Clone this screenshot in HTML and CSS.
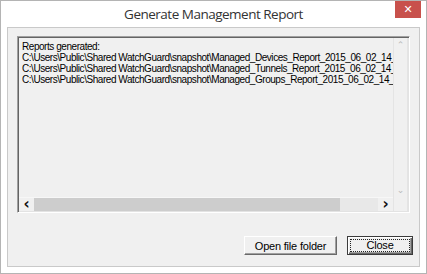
FILE: index.html
```html
<!DOCTYPE html>
<html lang="en">
<head>
  <meta charset="UTF-8">
  <title>Generate Management Report</title>
  <link rel="stylesheet" href="styles.css">
</head>
<body>
  <div class="window">
    <div class="titlebar">
      <span class="title">Generate Management Report</span>
      <button class="close-x" title="Close">&#x2715;</button>
    </div>

    <div class="client">
      <div class="report-box">
        <div class="report-view">
          <div class="report-text">Reports generated:
C:\Users\Public\Shared WatchGuard\snapshot\Managed_Devices_Report_2015_06_02_14_22_11.pdf
C:\Users\Public\Shared WatchGuard\snapshot\Managed_Tunnels_Report_2015_06_02_14_22_11.pdf
C:\Users\Public\Shared WatchGuard\snapshot\Managed_Groups_Report_2015_06_02_14_22_11.pdf</div>
        </div>
        <div class="vscroll">
          <span class="arrow">&#x2303;</span>
          <span class="arrow">&#x2304;</span>
        </div>
        <div class="hscroll">
          <span class="hbtn">&#x2039;</span>
          <div class="htrack"><div class="hthumb"></div></div>
          <span class="hbtn">&#x203A;</span>
        </div>
      </div>

      <div class="actions">
        <button class="btn btn-open">Open file folder</button>
        <button class="btn btn-default"><span class="focus">Close</span></button>
      </div>
    </div>
  </div>
</body>
</html>
```

FILE: styles.css
```css
* {
  margin: 0;
  padding: 0;
  box-sizing: border-box;
}

body {
  background: #ffffff;
  font-family: 'Liberation Sans', Arial, sans-serif;
}

.window {
  width: 427px;
  height: 274px;
  border: 1px solid #b4b4b4;
  background: #ffffff;
  padding: 0 6px 6px 6px;
  display: flex;
  flex-direction: column;
}

/* Title bar */
.titlebar {
  height: 26px;
  display: grid;
  grid-template-columns: 1fr auto 1fr;
  align-items: start;
}

.title {
  grid-column: 2;
  font-family: 'Open Sans', sans-serif;
  font-size: 13.5px;
  letter-spacing: -0.5px;
  color: #333333;
  line-height: 27px;
  white-space: nowrap;
}

.close-x {
  grid-column: 3;
  justify-self: end;
  width: 26px;
  height: 17px;
  margin-right: -1px;
  border: none;
  background: #c8514c;
  color: #ffffff;
  font-family: 'DejaVu Sans', sans-serif;
  font-size: 11px;
  font-weight: bold;
  line-height: 17px;
}

/* Client area */
.client {
  flex: 1;
  background: #f0f0f0;
  border: 1px solid #c9c9c9;
  padding: 8px 6px 0 9px;
  display: flex;
  flex-direction: column;
}

.report-box {
  width: 393px;
  height: 177px;
  border-style: solid;
  border-width: 1px;
  border-color: #a0a0a0 #ffffff #ffffff #a0a0a0;
  box-shadow: inset 1px 1px 0 #646464, inset -1px -1px 0 #e3e3e3;
  padding: 1px;
  display: grid;
  grid-template-columns: 1fr 15px;
  grid-template-rows: 1fr 14px;
  background: #f0f0f0;
}

.report-view {
  overflow: hidden;
  padding: 3px 0 0 3px;
}

.report-text {
  white-space: pre;
  font-size: 10px;
  letter-spacing: -0.45px;
  line-height: 11px;
  color: #000000;
}

/* Scroll bars */
.vscroll {
  grid-row: 1 / span 2;
  grid-column: 2;
  border-left: 1px solid #e4e4e4;
  border-right: 1px solid #e4e4e4;
  display: flex;
  flex-direction: column;
  justify-content: space-between;
  align-items: center;
  padding: 2px 0 16px 0;
  background: #f0f0f0;
}

.arrow {
  color: #b9b9b9;
  font-family: 'DejaVu Sans', sans-serif;
  font-size: 9px;
  line-height: 10px;
}

.hscroll {
  grid-row: 2;
  grid-column: 1;
  display: flex;
  align-items: stretch;
  background: #e8e8e8;
  border-top: 1px solid #f7f7f7;
}

.hbtn {
  width: 15px;
  flex-shrink: 0;
  background: #f0f0f0;
  color: #111111;
  font-family: 'DejaVu Sans', sans-serif;
  font-size: 15px;
  font-weight: bold;
  line-height: 12px;
  text-align: center;
}

.htrack {
  flex: 1;
  display: flex;
  align-items: stretch;
}

.hthumb {
  width: 306px;
  background: #cdcdcd;
}

/* Buttons */
.actions {
  margin-top: 23px;
  display: flex;
  justify-content: flex-end;
  gap: 10px;
}

.btn {
  height: 19px;
  background: #f0f0f0;
  font-family: 'Liberation Sans', Arial, sans-serif;
  font-size: 11px;
  color: #000000;
  border-style: solid;
  border-width: 1px;
  border-color: #ffffff #696969 #696969 #ffffff;
  box-shadow: inset -1px -1px 0 #a0a0a0;
}

.btn-open {
  width: 93px;
  letter-spacing: -0.2px;
}

.btn-default {
  width: 66px;
  border: 1px solid #3b3b3b;
  box-shadow: inset 1px 1px 0 #ffffff, inset -1px -1px 0 #696969, inset -2px -2px 0 #a0a0a0;
  padding: 2px;
  display: flex;
}

.focus {
  flex: 1;
  border: 1px dotted #222222;
  line-height: 11px;
  letter-spacing: -0.2px;
}
```
